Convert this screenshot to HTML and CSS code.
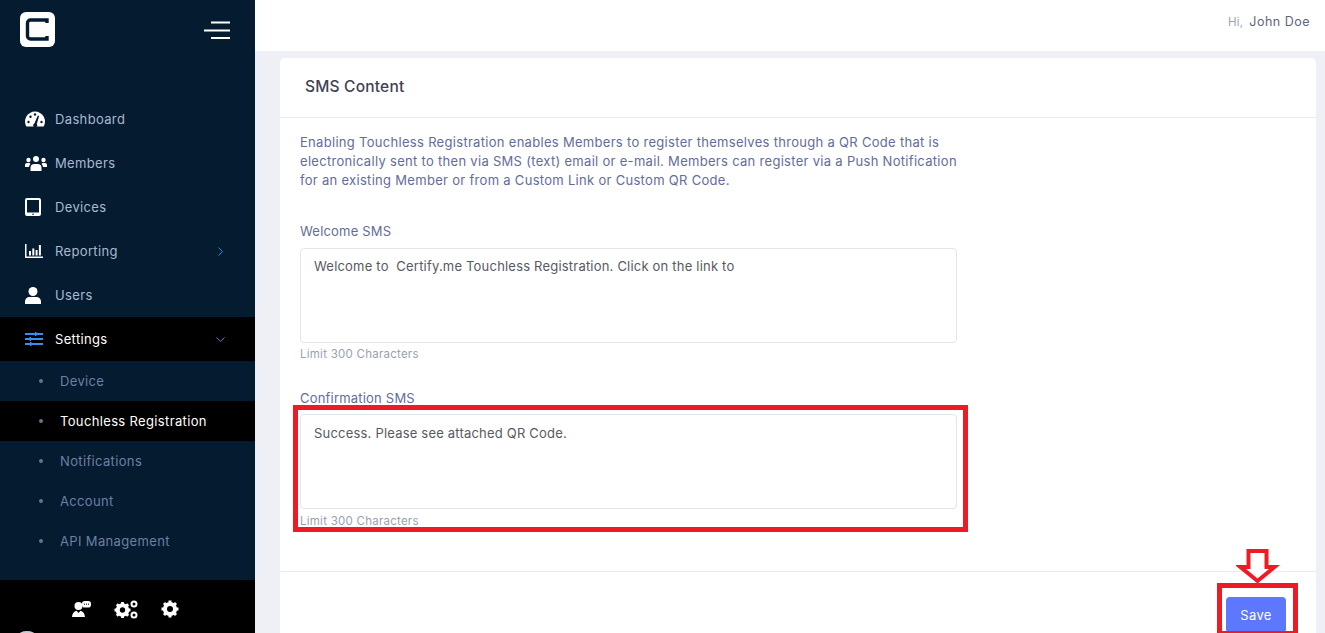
FILE: index.html
```html
<!DOCTYPE html>
<html lang="en">
<head>
<meta charset="utf-8">
<title>SMS Content</title>
<link rel="stylesheet" href="styles.css">
</head>
<body>
<div class="app">
  <aside class="sidebar">
    <div class="brand">
      <div class="logo"><svg width="35" height="35" viewBox="0 0 35 35"><rect width="35" height="35" rx="6" fill="#fff"/><path d="M27 11V8H10.500a3 3 0 0 0-3 3v13a3 3 0 0 0 3 3H27v-3" fill="none" stroke="#041b30" stroke-width="3.400"/></svg></div>
      <svg class="burger" width="26" height="18" viewBox="0 0 26 18"><path d="M7 1.500h19M0 9.500h26M7 17h19" stroke="#fff" stroke-width="2"/></svg>
    </div>
    <nav class="nav">
      <a class="item"><span class="ico"><svg width="20" height="16" viewBox="0 0 20 16"><path d="M1.300 15.500A10 10 0 1 1 18.700 15.500z" fill="#fff"/><g fill="#041b30"><circle cx="3.500" cy="11" r="1.200"/><circle cx="5.500" cy="5.800" r="1.200"/><circle cx="10" cy="3.500" r="1.200"/><circle cx="16.500" cy="11" r="1.200"/><path d="M12.800 4.500l1.300.5L11.800 13a2 2 0 1 1-2.400-.6z"/></g></svg></span><span>Dashboard</span></a>
      <a class="item"><span class="ico"><svg width="22" height="15" viewBox="0 0 22 15"><g fill="#fff"><circle cx="11" cy="3" r="3"/><circle cx="3.500" cy="4" r="2.200"/><circle cx="18.500" cy="4" r="2.200"/><path d="M5.500 15v-3a4 4 0 0 1 4-4h3a4 4 0 0 1 4 4v3z"/><path d="M0 11V9a2 2 0 0 1 2-2h2.500l1 1A5 5 0 0 0 4 11zM22 11V9a2 2 0 0 0-2-2h-2.500l-1 1a5 5 0 0 1 1.500 3z"/></g></svg></span><span>Members</span></a>
      <a class="item"><span class="ico"><svg width="16" height="18" viewBox="0 0 16 18"><path fill-rule="evenodd" d="M2 0h12a2 2 0 0 1 2 2v14a2 2 0 0 1-2 2H2a2 2 0 0 1-2-2V2a2 2 0 0 1 2-2zm0 2v12.500h12V2z" fill="#fff"/><circle cx="8" cy="16.200" r=".8" fill="#041b30"/></svg></span><span>Devices</span></a>
      <a class="item"><span class="ico"><svg width="18" height="14" viewBox="0 0 18 14"><path d="M.75 0v13.200H18" fill="none" stroke="#fff" stroke-width="1.500"/><path d="M4 7h2v4.500H4zM7.300 4.500h2v7h-2zM10.600 6h2v5.500h-2zM13.900 1h2v10.500h-2z" fill="#fff"/></svg></span><span>Reporting</span><svg class="chev chev-right" width="5" height="9" viewBox="0 0 5 9"><path d="M.5.500l4 4-4 4" fill="none" stroke="#2f86e6" stroke-width="1"/></svg></a>
      <a class="item"><span class="ico"><svg width="16" height="17" viewBox="0 0 16 17"><circle cx="8" cy="4.500" r="4.500" fill="#fff"/><path d="M0 17v-2.500A4.500 4.500 0 0 1 4.500 10h7a4.500 4.500 0 0 1 4.500 4.500V17z" fill="#fff"/></svg></span><span>Users</span></a>
      <a class="item item-open"><span class="ico"><svg width="18" height="14" viewBox="0 0 18 14"><path d="M0 2h18M0 7h18M0 12h18" stroke="#3b8cf0" stroke-width="1.800"/><path d="M10 0h1.500v4H10zM4.500 5H6v4H4.500zM5 10h1.500v4H5z" fill="#3b8cf0"/></svg></span><span>Settings</span><svg class="chev" width="9" height="5" viewBox="0 0 9 5"><path d="M.5.500l4 4 4-4" fill="none" stroke="#2f86e6" stroke-width="1"/></svg></a>
      <div class="sub">
        <a class="sub-item">Device</a>
        <a class="sub-item sub-active">Touchless Registration</a>
        <a class="sub-item">Notifications</a>
        <a class="sub-item">Account</a>
        <a class="sub-item">API Management</a>
      </div>
    </nav>
    <div class="side-foot">
      <svg width="19" height="16" viewBox="0 0 19 16"><circle cx="6.500" cy="5" r="4" fill="#fff"/><path d="M0 16c.3-3.500 2-5.500 4.500-6.200L6.500 12l2-2.200C11 10.500 12.700 12.500 13 16z" fill="#fff"/><rect x="10" y="0" width="9" height="6.500" rx="2.800" fill="#fff"/><path d="M12 3.200h5" stroke="#000" stroke-width="1" stroke-dasharray="1 1"/></svg>
      <svg width="24" height="19" viewBox="0 0 24 19"><g fill="none" stroke="#fff"><circle cx="8.500" cy="10" r="5" stroke-width="3.600"/><path d="M8.500 2v16M.5 10h16M2.800 4.300l11.400 11.400M14.200 4.300 2.800 15.700" stroke-width="2.800"/></g><circle cx="8.500" cy="10" r="2.700" fill="#000"/><g fill="none" stroke="#fff" stroke-width="2"><circle cx="20" cy="4" r="2.500"/><circle cx="20" cy="15" r="2.500"/></g></svg>
      <svg width="18" height="18" viewBox="0 0 18 18"><g fill="none" stroke="#fff"><circle cx="9" cy="9" r="5.200" stroke-width="3.800"/><path d="M9 .5v17M.5 9h17M3 3l12 12M15 3 3 15" stroke-width="3"/></g><circle cx="9" cy="9" r="3" fill="#000"/></svg>
      <span class="avatar-peek"></span>
    </div>
  </aside>
  <div class="main">
    <header class="topbar"><span class="hi">Hi,</span><span class="uname">John Doe</span></header>
    <div class="content">
      <section class="card">
        <h1 class="card-title">SMS Content</h1>
        <div class="card-body">
          <p class="intro">Enabling Touchless Registration enables Members to register themselves through a QR Code that is electronically sent to then via SMS (text) email or e-mail. Members can register via a Push Notification for an existing Member or from a Custom Link or Custom QR Code.</p>
          <div class="field">
            <label class="label">Welcome SMS</label>
            <div class="area">Welcome to&nbsp; Certify.me Touchless Registration. Click on the link to</div>
            <div class="hint">Limit 300 Characters</div>
          </div>
          <div class="field field-second">
            <label class="label">Confirmation SMS</label>
            <div class="area">Success. Please see attached QR Code.</div>
            <div class="hint">Limit 300 Characters</div>
          </div>
        </div>
        <div class="card-foot"><button class="save">Save</button></div>
      </section>
    </div>
  </div>
</div>
<div class="mark mark-field"></div>
<div class="mark mark-save"></div>
<svg class="mark-arrow" width="44" height="36" viewBox="0 0 44 36"><path d="M12.500 3H30.500V19H38.500L21.500 33 4.500 19H12.500Z" fill="#fff" stroke="#ed1c24" stroke-width="4"/></svg>
</body>
</html>
```
FILE: styles.css
```css
* { box-sizing: border-box; }
html, body { margin: 0; height: 100%; overflow: hidden; }
body { font-family: Inter, "Liberation Sans", sans-serif; background: #eff0f6; color: #3f4254; }
.app { display: flex; height: 633px; overflow: hidden; }

.sidebar { width: 255px; flex: none; background: #041b30; display: flex; flex-direction: column; }
.brand { height: 97px; padding: 12px 25px 0 20px; display: flex; justify-content: space-between; align-items: flex-start; }
.logo { width: 35px; height: 35px; }
.logo svg, .burger { display: block; }
.burger { margin-top: 9px; }
.nav { flex: 1; display: flex; flex-direction: column; }
.item { height: 44px; display: flex; align-items: center; padding: 0 30px 0 25px; font-size: 13px; letter-spacing: .35px; color: #a9bad0; position: relative; }
.ico { width: 30px; flex: none; display: flex; align-items: center; }
.chev { margin-left: auto; }
.chev-right { margin-right: 2px; }
.item-open { background: #000; color: #fff; }
.sub { background: #041b30; height: 219px; }
.sub-item { height: 40px; display: flex; align-items: center; padding-left: 60px; font-size: 13px; letter-spacing: .35px; color: #6f7fa3; position: relative; }
.sub-item::before { content: ""; position: absolute; left: 39px; top: 18px; width: 4px; height: 4px; border-radius: 50%; background: #66758f; }
.sub-active { background: #000; color: #fff; }
.side-foot { height: 53px; background: #000; display: flex; justify-content: center; align-items: center; gap: 23px; padding: 5px 5px 0 0; position: relative; }
.avatar-peek { position: absolute; left: 18px; bottom: -8px; width: 18px; height: 10px; border-radius: 50%; background: #c9ced6; }

.main { flex: 1; min-width: 0; display: flex; flex-direction: column; }
.topbar { height: 51px; flex: none; background: #fff; display: flex; justify-content: flex-end; gap: 6px; padding: 14px 15px 0 0; font-size: 12.500px; line-height: 16px; }
.hi { color: #9ea3b5; font-size: 11.500px; letter-spacing: .2px; }
.uname { color: #60647f; letter-spacing: .5px; }
.content { flex: 1; padding: 7px 9px 0 25px; overflow: hidden; }
.card { background: #fff; border-radius: 5px 5px 0 0; height: 600px; }
.card-title { margin: 0; height: 60px; padding: 0 25px 2px; display: flex; align-items: center; font-size: 15.500px; font-weight: 500; letter-spacing: .2px; color: #3f4254; border-bottom: 1px solid #ebedf3; }
.card-body { height: 453px; padding: 15px 20px 0; }
.intro { margin: 0; width: 666px; font-size: 13px; line-height: 19px; letter-spacing: .3px; color: #646c9a; }
.field { width: 657px; margin-top: 32px; }
.field-second { margin-top: 27px; }
.label { display: block; font-size: 13px; line-height: 18px; letter-spacing: .2px; color: #646c9a; margin-bottom: 8px; }
.field-second .label { margin-bottom: 7px; }
.area { height: 95px; border: 1px solid #e2e5ec; border-radius: 4px; padding: 8px 13px; font-size: 13px; line-height: 19px; letter-spacing: .2px; color: #575962; }
.field-second .area { padding-top: 9px; }
.hint { font-size: 11.500px; line-height: 16px; letter-spacing: .25px; margin-top: 3px; color: #9a9fb0; }
.field-second .hint { margin-top: 4px; }
.card-foot { border-top: 1px solid #ebedf3; padding: 25px 30px 0 0; display: flex; justify-content: flex-end; }
.save { width: 60px; height: 36px; border: 0; border-radius: 4px; background: #5d78ff; color: #fff; font: inherit; font-size: 13px; letter-spacing: .35px; padding: 0; }

.mark { position: absolute; border: 5px solid #ed1c24; pointer-events: none; }
.mark-field { left: 293px; top: 405px; width: 675px; height: 127px; }
.mark-save { left: 1217px; top: 583px; width: 81px; height: 53px; }
.mark-arrow { position: absolute; left: 1236px; top: 548px; }
```
